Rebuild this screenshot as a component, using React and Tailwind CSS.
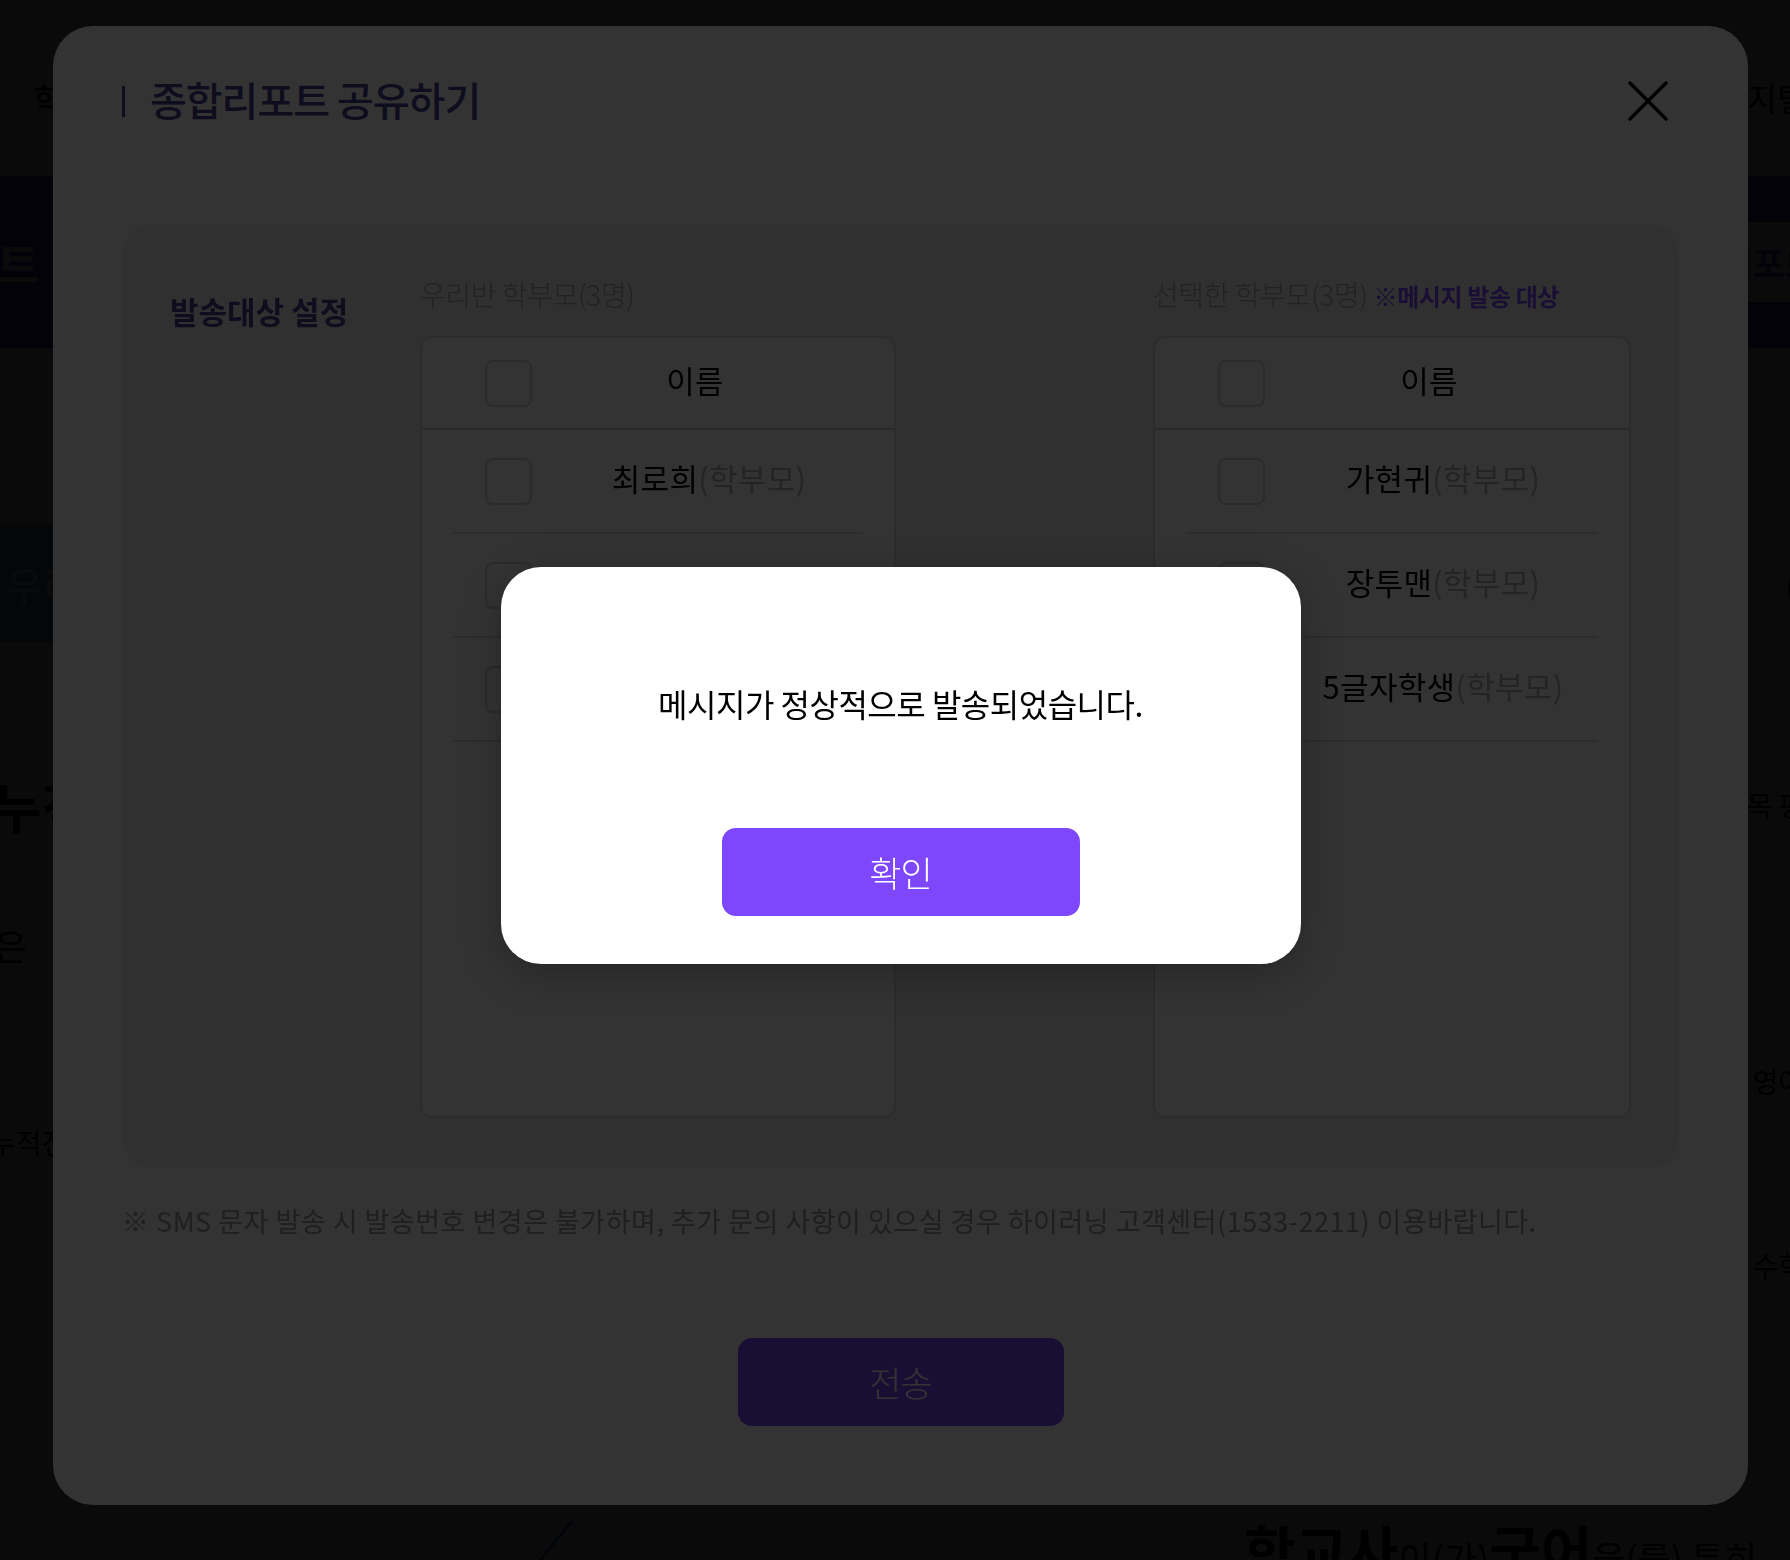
import React from 'react';

// Korean font stack used everywhere
const KR = "font-['Noto_Sans_CJK_KR','Noto_Sans',sans-serif]";

// Page that sits behind both overlays (almost entirely covered)
const BackgroundPage = () => (
  <div className="h-[1560px] w-full overflow-hidden bg-white">
    {/* top header */}
    <div className="flex h-[176px] justify-between">
      <div className="whitespace-nowrap pl-[34px] pt-[74px] text-[32px] font-medium text-black">학습 현황</div>
      <div className="mt-[60px] flex h-[74px] w-[80px] items-center whitespace-nowrap rounded-l-[10px] border-y-2 border-l-2 border-[#cfcfcf] pl-[6px] text-[32px] text-black">
        디지털
      </div>
    </div>

    {/* purple banner */}
    <div className="flex h-[172px] justify-between overflow-hidden bg-[#6b3cf5]">
      <div className="-ml-[88px] pt-[52px] whitespace-nowrap text-[46px] font-bold text-white">리포트</div>
      <div className="mt-[46px] flex h-[80px] w-[76px] items-center whitespace-nowrap rounded-l-[14px] bg-white pl-[8px] text-[34px] font-bold text-[#6b3cf5]">
        리포트
      </div>
    </div>

    {/* body rows peeking out at both sides */}
    <div className="h-[177px]" />
    <div className="flex h-[117px] items-center justify-between">
      <div className="-ml-[60px] flex h-full w-[120px] items-center whitespace-nowrap bg-[#4fc3f7] pl-[66px] text-[40px] text-white">우리반</div>
      <div className="-mr-[8px] text-[40px] text-black">(</div>
    </div>
    <div className="h-[133px]" />
    <div className="flex h-[60px] items-center justify-between">
      <div className="-ml-[8px] whitespace-nowrap text-[54px] font-bold text-black">누적</div>
      <div className="-mr-[40px] whitespace-nowrap text-[28px] text-black">과목 평균</div>
    </div>
    <div className="h-[90px]" />
    <div className="flex h-[40px] items-center">
      <div className="-ml-[6px] whitespace-nowrap text-[36px] text-black">은</div>
    </div>
    <div className="h-[96px]" />
    <div className="flex h-[40px] items-center justify-end">
      <div className="-mr-[14px] whitespace-nowrap text-[28px] text-black">영어</div>
    </div>
    <div className="h-[21px]" />
    <div className="flex h-[40px] items-center">
      <div className="-ml-[10px] whitespace-nowrap text-[28px] text-black">누적진</div>
    </div>
    <div className="h-[83px]" />
    <div className="flex h-[40px] items-center justify-end">
      <div className="-mr-[14px] whitespace-nowrap text-[28px] text-black">수학</div>
    </div>
    <div className="h-[236px]" />
    <div className="flex h-[39px] items-start whitespace-nowrap leading-none text-black">
      <svg className="ml-[530px] shrink-0" width="50" height="42" viewBox="0 0 50 42" fill="none">
        <path d="M42 0L8 42" stroke="#2a6fdb" strokeWidth="3" />
      </svg>
      <div className="ml-[664px] flex items-baseline">
        <span className="text-[56px] font-bold">학교사</span>
        <span className="text-[36px]">이(가) </span>
        <span className="text-[56px] font-bold">국어</span>
        <span className="text-[36px]">을(를) 특히</span>
      </div>
    </div>
  </div>
);

// Square checkbox used in both tables
const CheckBox = () => (
  <div className="h-[47px] w-[47px] shrink-0 rounded-[8px] border-2 border-[#d4d4d4] bg-white" />
);

// Parent table (header + rows)
const ParentTable = ({ names, width }) => (
  <div className={`${width} h-[782px] rounded-[12px] border-2 border-[#dcdcdc] bg-white`}>
    {/* header row */}
    <div className="flex h-[92px] items-center border-b-2 border-[#d2d2d2] pl-[63px] pr-[36px]">
      <CheckBox />
      <div className="flex-1 pb-[6px] text-center text-[31px] tracking-[0.3px] text-black">이름</div>
    </div>
    {/* body rows */}
    {names.map((name) => (
      <div key={name} className="mx-[31px] flex h-[104px] items-center border-b-2 border-[#d9d9d9] pl-[32px]">
        <CheckBox />
        <div className="flex-1 whitespace-nowrap pb-[6px] pl-[23px] text-center text-[31px] tracking-[0.3px]">
          <span className="text-black">{name}</span>
          <span className="text-[#b3b3b3]">(학부모)</span>
        </div>
      </div>
    ))}
  </div>
);

// Main share-report modal
const ShareModal = () => (
  <div className="flex h-[1479px] w-[1695px] flex-col rounded-[40px] bg-white">
    {/* title bar */}
    <div className="flex h-[151px] shrink-0 items-center justify-between border-b border-[#f3f3f3] pl-[69px] pr-[80px]">
      <div className="flex items-center">
        <div className="h-[31px] w-[3px] bg-[#48408f]" />
        <h2 className="ml-[25px] pb-[4px] text-[40px] font-medium tracking-[-1px] text-[#48408f]">종합리포트 공유하기</h2>
      </div>
      <svg width="40" height="40" viewBox="0 0 40 40" fill="none">
        <path d="M2 2L38 38M38 2L2 38" stroke="#000" strokeWidth="3.4" strokeLinecap="round" />
      </svg>
    </div>

    {/* gray selection panel */}
    <div className="mx-[69px] mt-[47px] flex h-[944px] shrink-0 rounded-[30px] bg-[#f1f1f1] px-[48px] pt-[49px] pb-[50px]">
      <div className="w-[250px] shrink-0 pt-[15px]">
        <div className="text-[31px] font-bold leading-[45px] text-[#48408f]">발송대상 설정</div>
      </div>

      <div className="flex w-[476px] shrink-0 flex-col">
        <div className="mb-[21px] h-[42px] whitespace-nowrap text-[28px] font-light leading-[42px] tracking-[-0.4px] text-[#a8a8a8]">
          우리반 학부모(3명)
        </div>
        <ParentTable width="w-[476px]" names={['최로희', '가현귀', '장투맨']} />
      </div>

      <div className="ml-[257px] flex w-[478px] shrink-0 flex-col">
        <div className="mb-[21px] h-[42px] whitespace-nowrap leading-[42px]">
          <span className="text-[28px] font-light tracking-[-0.4px] text-[#a8a8a8]">선택한 학부모(3명) </span>
          <span className="text-[24px] font-bold tracking-[-0.4px] text-[#7d45fd]">※메시지 발송 대상</span>
        </div>
        <ParentTable width="w-[478px]" names={['가현귀', '장투맨', '5글자학생']} />
      </div>
    </div>

    {/* notice */}
    <p className="ml-[69px] mt-[33px] whitespace-nowrap text-[27px] leading-[39px] tracking-[0.5px] text-[#9a9a9a]">
      ※ SMS 문자 발송 시 발송번호 변경은 불가하며, 추가 문의 사항이 있으실 경우 하이러닝 고객센터(1533-2211) 이용바랍니다.
    </p>

    {/* send button */}
    <button className="mx-auto mt-[98px] flex h-[88px] w-[326px] shrink-0 items-center justify-center rounded-[14px] bg-[#7d45fd] text-[35px] font-light tracking-[-1px] text-white">
      전송
    </button>
  </div>
);

// Confirmation alert shown on top of the modal
const SentAlert = () => (
  <div className="flex h-[397px] w-[800px] flex-col items-center rounded-[40px] bg-white pt-[112px] shadow-[0_10px_40px_rgba(0,0,0,0.25)]">
    <p className="text-[32px] leading-[48px] tracking-[-0.5px] text-black">메시지가 정상적으로 발송되었습니다.</p>
    <button className="mt-[101px] flex h-[88px] w-[358px] items-center justify-center rounded-[14px] bg-[#7e47fc] text-[35px] font-light tracking-[-1px] text-white">
      확인
    </button>
  </div>
);

export default function App() {
  return (
    <div className={`relative h-[1560px] w-[1790px] overflow-hidden ${KR}`}>
      <BackgroundPage />

      {/* modal backdrop + modal */}
      <div className="fixed inset-0 bg-black/80 pt-[26px] pl-[53px]">
        <ShareModal />
      </div>

      {/* alert backdrop + alert */}
      <div className="fixed inset-0 bg-black/80 pt-[26px] pl-[53px]">
        <div className="flex h-[1479px] w-[1695px] items-center justify-center">
          <SentAlert />
        </div>
      </div>
    </div>
  );
}
